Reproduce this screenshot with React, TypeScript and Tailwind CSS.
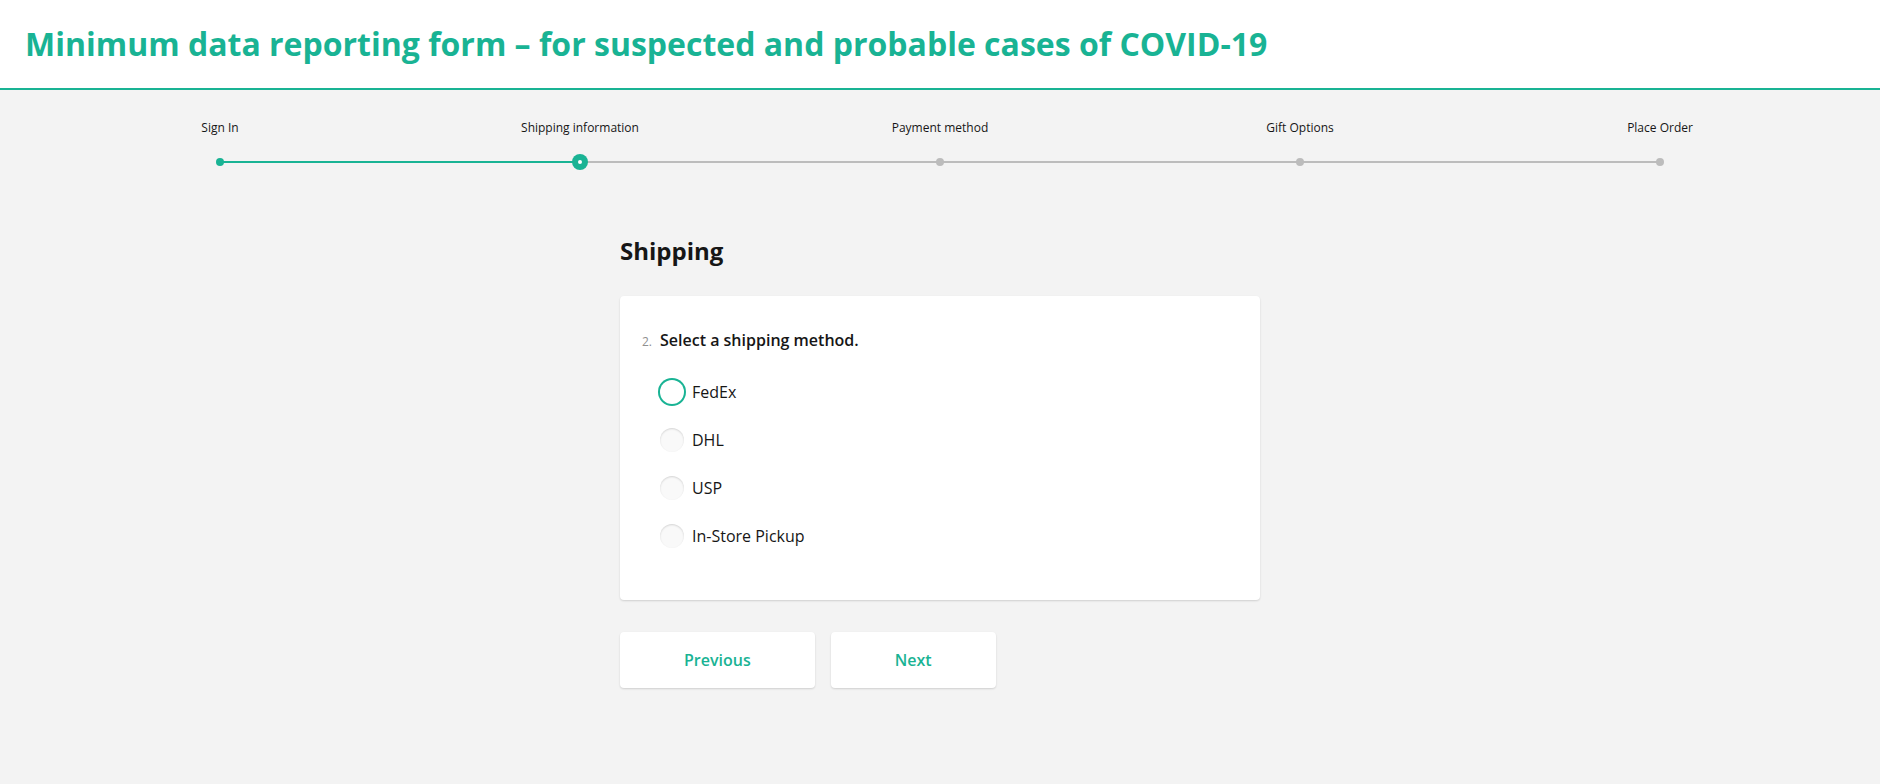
import { useState } from 'react';

const steps = ['Sign In', 'Shipping information', 'Payment method', 'Gift Options', 'Place Order'];
const options = ['FedEx', 'DHL', 'USP', 'In-Store Pickup'];

export default function App() {
  const [current] = useState(1);
  const [selected, setSelected] = useState<string | null>(null);

  return (
    <div className="min-h-screen bg-[#f3f3f3] text-[#161616]" style={{ fontFamily: '"Open Sans", sans-serif' }}>
      <header className="bg-white border-b-2 border-[#19b394] px-[25px] py-6">
        <h1 className="text-[32px] leading-10 font-bold text-[#19b394]">
          Minimum data reporting form – for suspected and probable cases of COVID-19
        </h1>
      </header>

      <div className="flex px-10 pt-[30px]">
        {steps.map((step, i) => {
          const done = i <= current;
          return (
            <div key={step} className="flex-1 flex flex-col items-center">
              <div className="text-xs leading-4 text-[#161616]">{step}</div>
              <div className="relative mt-[18px] h-4 w-full flex items-center justify-center">
                {i > 0 && (
                  <div className={`absolute left-0 right-1/2 top-[7px] h-[2px] ${done ? 'bg-[#19b394]' : 'bg-[#bcbcbc]'}`} />
                )}
                {i < steps.length - 1 && (
                  <div className={`absolute left-1/2 right-0 top-[7px] h-[2px] ${i < current ? 'bg-[#19b394]' : 'bg-[#bcbcbc]'}`} />
                )}
                {i === current ? (
                  <div className="relative w-4 h-4 rounded-full bg-[#19b394] flex items-center justify-center">
                    <div className="w-1 h-1 rounded-full bg-white" />
                  </div>
                ) : (
                  <div className={`relative w-2 h-2 rounded-full ${done ? 'bg-[#19b394]' : 'bg-[#bcbcbc]'}`} />
                )}
              </div>
            </div>
          );
        })}
      </div>

      <main className="w-[640px] mx-auto mt-[65px] pb-24">
        <h2 className="text-2xl leading-8 font-bold">Shipping</h2>

        <div className="mt-[29px] bg-white rounded shadow-[0_1px_2px_rgba(0,0,0,0.15)] pl-[22px] pr-6 pt-8 pb-10">
          <div className="flex items-baseline gap-2">
            <span className="text-xs text-[#909090]">2.</span>
            <span className="text-base leading-6 font-semibold">Select a shipping method.</span>
          </div>
          <div className="mt-4 pl-[18px]">
            {options.map((opt, i) => {
              const focused = selected ? selected === opt : i === 0;
              return (
                <label key={opt} className="flex items-center gap-2 h-12 cursor-pointer" onClick={() => setSelected(opt)}>
                  <span
                    className={`w-6 h-6 rounded-full ${
                      focused
                        ? 'bg-white ring-2 ring-[#19b394]'
                        : 'bg-[#f9f9f9] shadow-[inset_0_1px_2px_rgba(0,0,0,0.15)]'
                    }`}
                  />
                  <span className="text-base leading-6">{opt}</span>
                </label>
              );
            })}
          </div>
        </div>

        <div className="mt-8 flex gap-4">
          <button className="px-16 py-4 bg-white rounded shadow-[0_1px_2px_rgba(0,0,0,0.15)] text-base leading-6 font-semibold text-[#19b394]">
            Previous
          </button>
          <button className="px-16 py-4 bg-white rounded shadow-[0_1px_2px_rgba(0,0,0,0.15)] text-base leading-6 font-semibold text-[#19b394]">
            Next
          </button>
        </div>
      </main>
    </div>
  );
}
